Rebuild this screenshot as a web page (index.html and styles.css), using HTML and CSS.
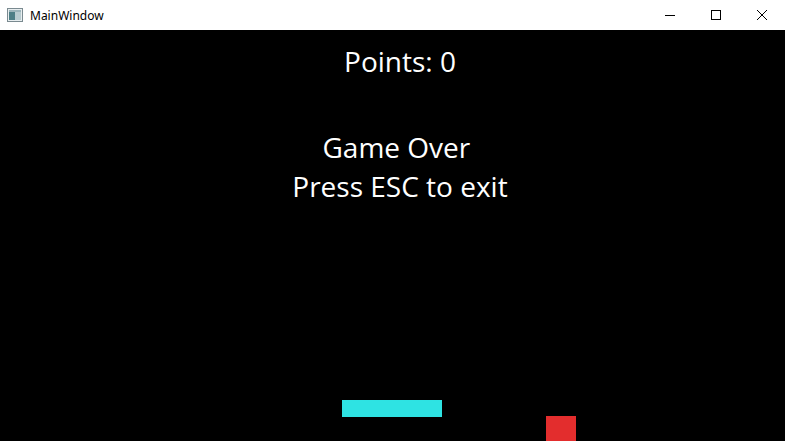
FILE: index.html
```html
<!DOCTYPE html>
<html>
<head>
<meta charset="utf-8">
<link rel="stylesheet" href="styles.css">
</head>
<body>
<div class="window">
  <div class="titlebar">
    <div class="app-icon">
      <svg width="16" height="16" viewBox="0 0 16 16">
        <rect x="0.5" y="1.5" width="15" height="13" fill="#e8eef0" stroke="#7a8a90"/>
        <rect x="2" y="3" width="6" height="10" fill="#4e7f86"/>
        <rect x="8" y="3" width="6" height="10" fill="#b9ccd0"/>
        <rect x="2" y="3" width="12" height="2" fill="#9bb4ba"/>
      </svg>
    </div>
    <div class="title">MainWindow</div>
    <div class="controls">
      <div class="ctl"><svg width="10" height="10" viewBox="0 0 10 10"><rect x="0" y="5" width="10" height="1" fill="#000"/></svg></div>
      <div class="ctl"><svg width="10" height="10" viewBox="0 0 10 10"><rect x="0.5" y="0.5" width="9" height="9" fill="none" stroke="#000"/></svg></div>
      <div class="ctl"><svg width="10" height="10" viewBox="0 0 10 10"><path d="M0 0 L10 10 M10 0 L0 10" stroke="#000" stroke-width="1"/></svg></div>
    </div>
  </div>
  <div class="game">
    <div class="points">Points: 0</div>
    <div class="over">Game Over&nbsp;<br>Press ESC to exit</div>
    <div class="paddle"></div>
    <div class="block"></div>
  </div>
</div>
</body>
</html>
```
FILE: styles.css
```css
html, body {
  margin: 0;
  padding: 0;
  width: 785px;
  height: 441px;
  overflow: hidden;
  background: #000;
}
.window {
  width: 785px;
  height: 441px;
  display: flex;
  flex-direction: column;
}
.titlebar {
  height: 30px;
  background: #fff;
  display: flex;
  align-items: center;
  font-family: "Noto Sans", "Open Sans", sans-serif;
  font-size: 12px;
  color: #000;
}
.app-icon {
  width: 16px;
  height: 16px;
  margin-left: 7px;
  margin-right: 7px;
  display: flex;
}
.title {
  flex: 1;
}
.controls {
  display: flex;
  height: 30px;
}
.ctl {
  width: 46px;
  height: 30px;
  display: flex;
  align-items: center;
  justify-content: center;
}
.game {
  position: relative;
  flex: 1;
  background: #000;
  color: #fff;
  font-family: "Open Sans", "Noto Sans", sans-serif;
  font-size: 28px;
  text-align: center;
  padding-left: 15px;
}
.points {
  margin-top: 13px;
  line-height: 36px;
}
.over {
  margin-top: 49px;
  line-height: 39px;
}
.paddle {
  position: absolute;
  left: 342px;
  top: 370px;
  width: 100px;
  height: 17px;
  background: #2ee3e3;
}
.block {
  position: absolute;
  left: 546px;
  top: 386px;
  width: 30px;
  height: 30px;
  background: #e32d2d;
}
```
